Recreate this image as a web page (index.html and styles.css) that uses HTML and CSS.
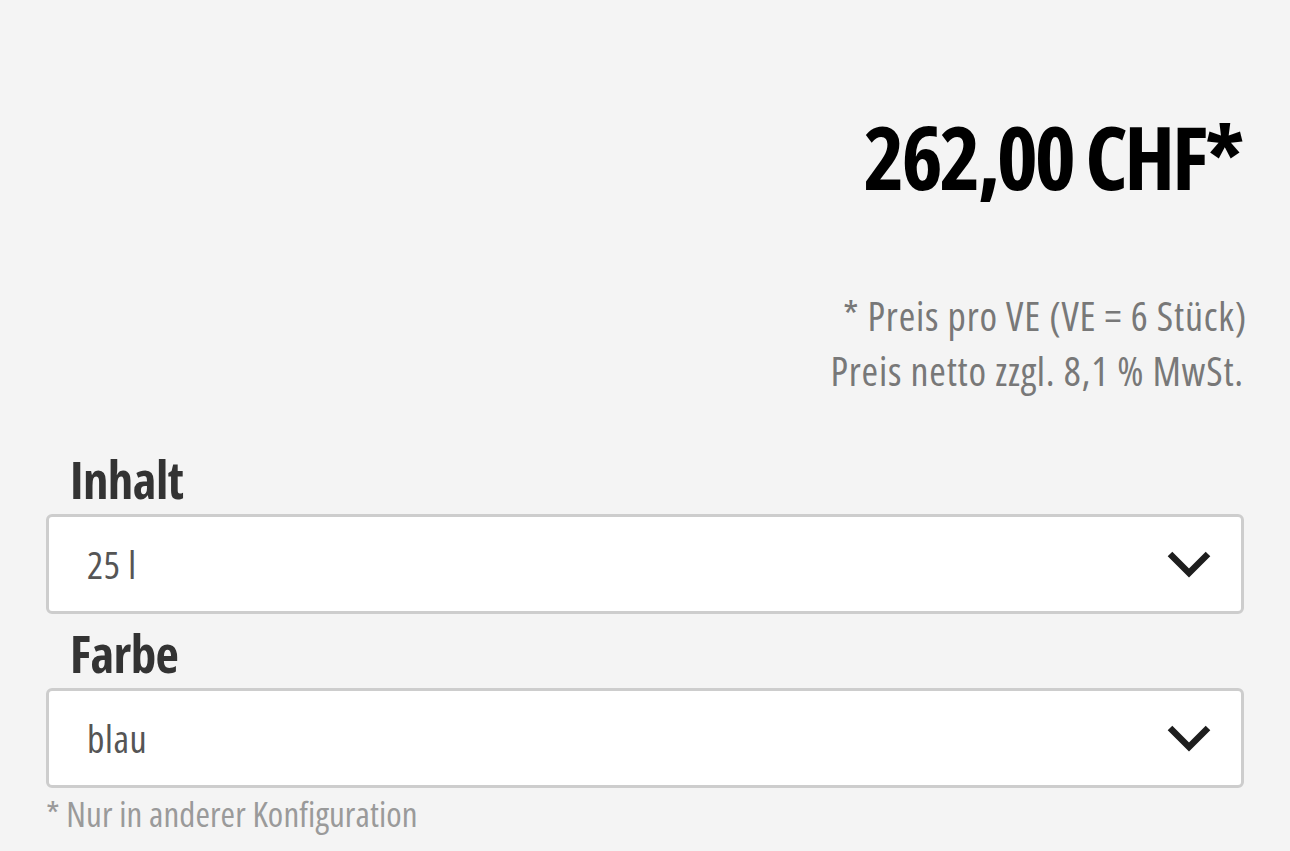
FILE: index.html
```html
<!DOCTYPE html>
<html lang="de">
<head>
	<meta charset="UTF-8">
	<title>Produkt</title>
	<link rel="stylesheet" href="styles.css">
</head>
<body>
	<div class="buybox">
		<div class="price">262,00 CHF*</div>
		<div class="price-info">
			<p class="vat-first">* Preis pro VE (VE = 6 Stück)</p>
			<p>Preis netto zzgl. 8,1 % MwSt.</p>
		</div>
		<div class="group">
			<div class="label">Inhalt</div>
			<div class="select">
				<span>25 l</span>
				<svg class="chev" viewBox="0 0 44 28" width="44" height="28"><path d="M3 4 L22 23 L41 4" fill="none" stroke="#1e1e1e" stroke-width="6.5"/></svg>
			</div>
		</div>
		<div class="group">
			<div class="label">Farbe</div>
			<div class="select">
				<span>blau</span>
				<svg class="chev" viewBox="0 0 44 28" width="44" height="28"><path d="M3 4 L22 23 L41 4" fill="none" stroke="#1e1e1e" stroke-width="6.5"/></svg>
			</div>
		</div>
		<div class="note">* Nur in anderer Konfiguration</div>
	</div>
</body>
</html>
```
FILE: styles.css
```css
* {
	margin: 0;
	padding: 0;
	box-sizing: border-box;
}
body {
	background-color: #f4f4f4;
	font-family: "Open Sans", "DejaVu Sans Condensed", sans-serif;
	font-stretch: 75%;
	color: #333;
}
.buybox {
	padding: 96px 46px 0 46px;
}
.price {
	text-align: right;
	font-size: 88px;
	font-weight: bold;
	color: #000;
	line-height: 120px;
	letter-spacing: -3.3px;
	padding-right: 3px;
}
.price-info {
	margin-top: 72px;
	text-align: right;
	color: #787878;
	font-size: 40px;
	letter-spacing: 0.8px;
	line-height: 55px;
}
.vat-first {
	margin-right: -3px;
}
.group {
	margin-top: 14px;
}
.price-info + .group {
	margin-top: 56px;
}
.label {
	font-size: 51px;
	font-weight: bold;
	color: #333;
	letter-spacing: -0.6px;
	padding-left: 24px;
	line-height: 50px;
	padding-bottom: 6px;
}
.select {
	margin-top: 4px;
	height: 100px;
	background-color: #fff;
	border: 3px solid #cdcdcd;
	border-radius: 6px;
	display: flex;
	align-items: center;
	justify-content: space-between;
	padding: 0 30px 0 38px;
	font-size: 38px;
	letter-spacing: 0.6px;
	color: #555;
}
.note {
	margin-top: 2px;
	font-size: 35px;
	letter-spacing: 0.1px;
	color: #9a9a9a;
}
```
